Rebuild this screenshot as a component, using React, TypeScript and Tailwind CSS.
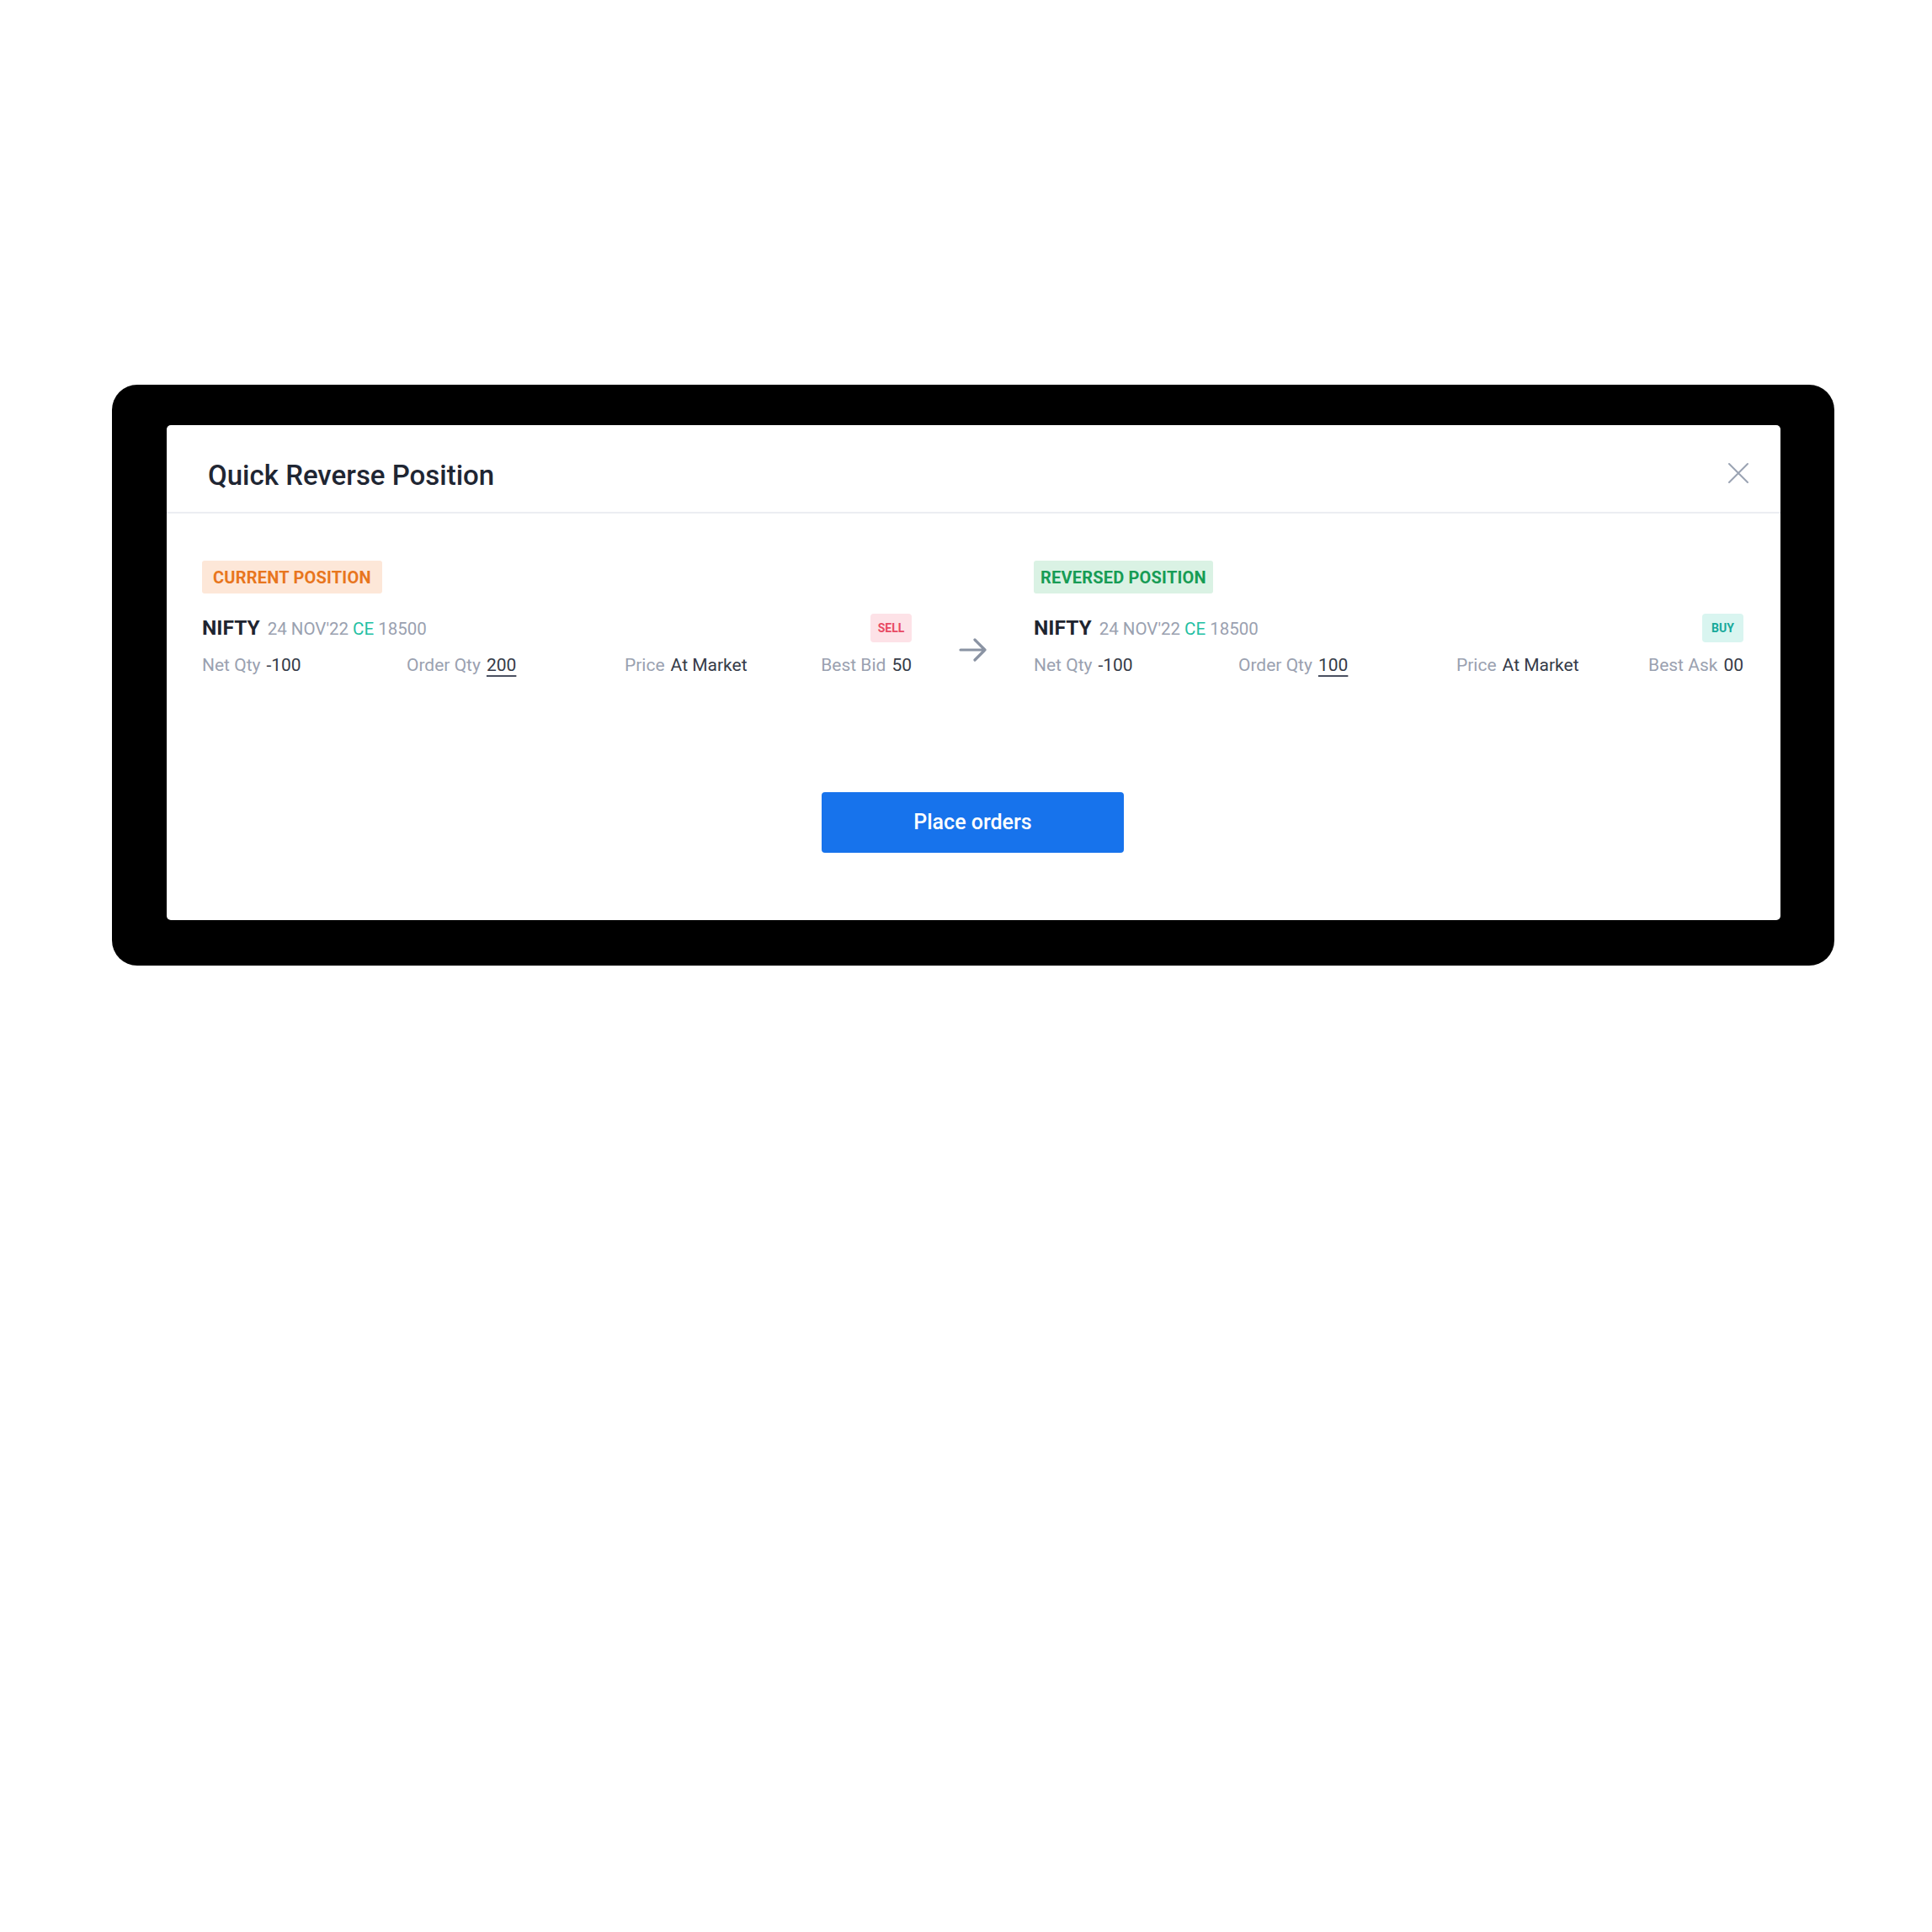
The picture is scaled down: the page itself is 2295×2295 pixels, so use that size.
import React from "react";

const font = { fontFamily: "Roboto, 'Liberation Sans', sans-serif" };

function Stat({ label, value, underline, right }: { label: string; value: string; underline?: boolean; right?: boolean }) {
  return (
    <div className={`flex items-baseline gap-[7px] whitespace-nowrap ${right ? "justify-end" : ""}`}>
      <span className="text-[#9aa1b0]">{label}</span>
      <span
        className={`text-[#353b48] ${underline ? "underline decoration-[2px] underline-offset-[5px] decoration-[#4a5060]" : ""}`}
      >
        {value}
      </span>
    </div>
  );
}

function Section({
  badge,
  badgeCls,
  side,
  sideCls,
  qty,
  bestLabel,
  bestValue,
}: {
  badge: string;
  badgeCls: string;
  side: string;
  sideCls: string;
  qty: string;
  bestLabel: string;
  bestValue: string;
}) {
  return (
    <div className="w-[843px] flex flex-col">
      <div className="flex">
        <div className={`h-[39px] rounded-[3px] flex items-center text-[20px] font-bold tracking-[0.2px] ${badgeCls}`}>
          {badge}
        </div>
      </div>
      <div className="mt-[24px] h-[34px] flex items-center justify-between">
        <div className="flex items-baseline gap-[9px] whitespace-nowrap">
          <span className="text-[24.5px] font-bold text-[#1f2530]">NIFTY</span>
          <span className="text-[20.5px] text-[#9aa1b0]">
            24 NOV'22 <span className="text-[#22bfa3]">CE</span> 18500
          </span>
        </div>
        <div className={`h-[34px] w-[49px] rounded-[4px] flex items-center justify-center text-[14px] font-bold ${sideCls}`}>
          {side}
        </div>
      </div>
      <div className="mt-[14px] grid grid-cols-[243px_259px_1fr_auto] items-baseline text-[21px] leading-[27px]">
        <Stat label="Net Qty" value="-100" />
        <Stat label="Order Qty" value={qty} underline />
        <Stat label="Price" value="At Market" />
        <Stat label={bestLabel} value={bestValue} right />
      </div>
    </div>
  );
}

export default function App() {
  return (
    <div className="min-h-[2295px] bg-white pt-[457px] pl-[133px]" style={font}>
      <div className="w-[2046px] bg-black rounded-[30px] pt-[48px] pl-[65px] pr-[64px] pb-[54px]">
        <div className="bg-white rounded-[5px] flex flex-col">
          <div className="h-[105px] pt-[16px] pl-[49px] pr-[37px] flex items-center justify-between border-b-2 border-[#eceef2]">
            <h1 className="text-[33px] font-medium text-[#1f2633]">Quick Reverse Position</h1>
            <svg width="26" height="26" viewBox="0 0 26 26" className="-mt-[6px]">
              <path d="M2 2 L24 24 M24 2 L2 24" stroke="#9aa3b3" strokeWidth="2" strokeLinecap="round" />
            </svg>
          </div>
          <div className="pt-[56px] pl-[42px] pr-[44px] pb-[80px] flex flex-col">
            <div className="flex items-start justify-between">
              <Section
                badge="CURRENT POSITION"
                badgeCls="px-[13px] bg-[#fde7d8] text-[#e8761e]"
                side="SELL"
                sideCls="bg-[#fde2e7] text-[#e84a64]"
                qty="200"
                bestLabel="Best Bid"
                bestValue="50"
              />
              <div className="mt-[92px] w-[34px] h-[28px] flex items-center justify-center">
                <svg width="34" height="28" viewBox="0 0 34 28">
                  <path
                    d="M2 14 H31 M19 2 L31 14 L19 26"
                    stroke="#8a93a3"
                    strokeWidth="3.2"
                    fill="none"
                    strokeLinecap="round"
                    strokeLinejoin="round"
                  />
                </svg>
              </div>
              <Section
                badge="REVERSED POSITION"
                badgeCls="px-[8px] bg-[#daf2e4] text-[#179c55]"
                side="BUY"
                sideCls="bg-[#d9f5f0] text-[#17a99a]"
                qty="100"
                bestLabel="Best Ask"
                bestValue="00"
              />
            </div>
            <div className="mt-[137px] flex justify-center">
              <button className="w-[359px] h-[72px] rounded-[4px] bg-[#1773ec] text-white text-[25px] font-medium">
                Place orders
              </button>
            </div>
          </div>
        </div>
      </div>
    </div>
  );
}
